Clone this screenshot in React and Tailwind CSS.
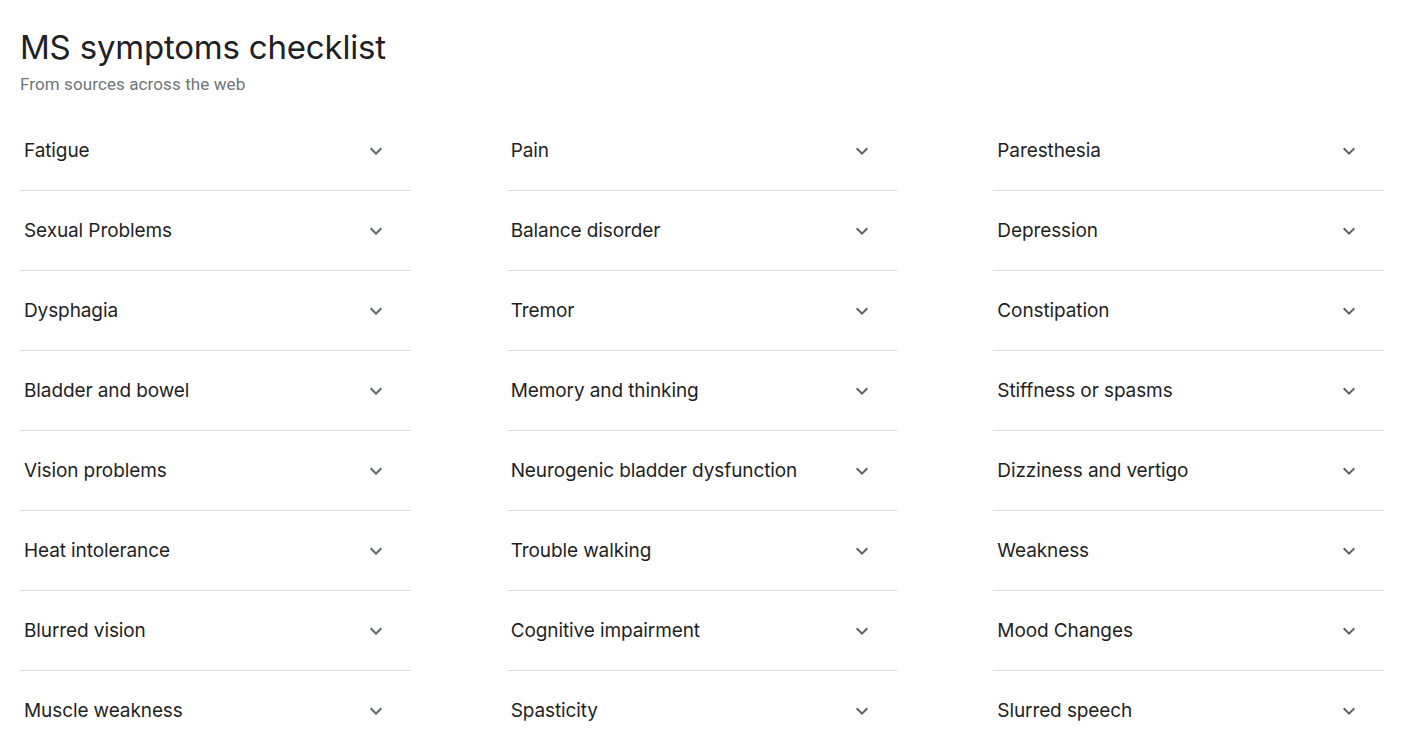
const columns = [
  ["Fatigue", "Sexual Problems", "Dysphagia", "Bladder and bowel", "Vision problems", "Heat intolerance", "Blurred vision", "Muscle weakness"],
  ["Pain", "Balance disorder", "Tremor", "Memory and thinking", "Neurogenic bladder dysfunction", "Trouble walking", "Cognitive impairment", "Spasticity"],
  ["Paresthesia", "Depression", "Constipation", "Stiffness or spasms", "Dizziness and vertigo", "Weakness", "Mood Changes", "Slurred speech"],
];

function Chevron() {
  return (
    <svg width="24" height="24" viewBox="0 0 24 24" className="shrink-0 fill-[#5f6368]">
      <path d="M16.59 8.59L12 13.17 7.41 8.59 6 10l6 6 6-6z" />
    </svg>
  );
}

export default function App() {
  return (
    <div className="min-h-screen bg-white pl-5 pt-[27px] font-['Inter',sans-serif] text-[#202124]">
      <h1 className="text-[33px] font-normal leading-[40px] tracking-[-0.2px]">MS symptoms checklist</h1>
      <div className="mt-[6px] font-['Roboto',sans-serif] text-[17px] leading-[22px] tracking-[0.1px] text-[#70757a]">
        From sources across the web
      </div>

      <div className="mt-4 grid w-[1364px] grid-cols-3 gap-x-24">
        {columns.map((col, ci) => (
          <div key={ci} className="flex flex-col">
            {col.map((item) => (
              <div
                key={item}
                className="flex h-[80px] items-center justify-between border-b border-[#dadce0] pl-1 pr-[23px]"
              >
                <span className="text-[19px] leading-6 tracking-[-0.1px] text-[#1f1f1f]">{item}</span>
                <Chevron />
              </div>
            ))}
          </div>
        ))}
      </div>
    </div>
  );
}
